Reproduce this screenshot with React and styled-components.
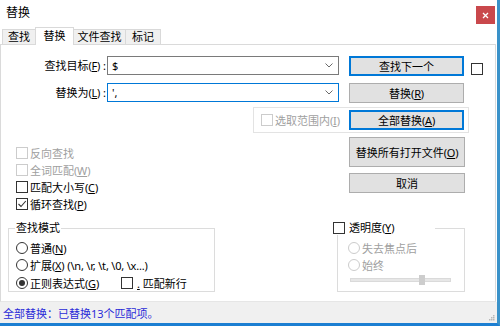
import React from "react";
import styled, { createGlobalStyle } from "styled-components";

const GlobalStyle = createGlobalStyle`
  html, body {
    margin: 0;
    padding: 0;
    background: #fff;
  }
  body {
    font-family: "Noto Sans", "Noto Sans CJK SC", sans-serif;
    font-size: 11px;
    color: #000;
    text-autospace: no-autospace;
  }
  * {
    box-sizing: border-box;
  }
`;

const Window = styled.div`
  width: 500px;
  height: 326px;
  display: flex;
  flex-direction: column;
  background: #fff;
  border-right: 3px solid #3a92c9;
  border-bottom: 3px solid #1c7fd2;
  overflow: hidden;
`;

const TitleBar = styled.div`
  flex: none;
  height: 27px;
  display: flex;
  justify-content: space-between;
  align-items: flex-start;
  padding-left: 6px;
`;

const Title = styled.div`
  font-size: 12px;
  line-height: 26px;
`;

const CloseButton = styled.div`
  width: 19px;
  height: 18px;
  margin: 6px 2px 0 0;
  background: #c9484c;
  display: flex;
  align-items: center;
  justify-content: center;
`;

const TabStrip = styled.div`
  flex: none;
  height: 17px;
  display: flex;
  align-items: flex-end;
  padding-left: 2px;
  position: relative;
  z-index: 1;
`;

const Tab = styled.div`
  width: ${p => p.$w}px;
  height: ${p => (p.$active ? 18 : 15)}px;
  margin-bottom: ${p => (p.$active ? -1 : 0)}px;
  margin-left: ${p => (p.$first ? 0 : -1)}px;
  background: ${p => (p.$active ? "#fff" : "#f0f0f0")};
  border: 1px solid #d9d9d9;
  border-bottom: none;
  display: flex;
  justify-content: center;
  line-height: ${p => (p.$active ? 15 : 14)}px;
  position: relative;
  z-index: ${p => (p.$active ? 2 : 1)};
`;

const Panel = styled.div`
  flex: none;
  height: 258px;
  margin-right: 1px;
  border: 1px solid #dadada;
  border-bottom-color: #e6e6e6;
  padding-top: 11px;
  display: flex;
  flex-direction: column;
`;

const FieldRow = styled.div`
  display: flex;
  align-items: flex-start;
  height: 20px;
  margin-top: ${p => p.$gap || 0}px;
`;

const FieldLabel = styled.div`
  width: 106px;
  text-align: right;
  line-height: 19px;
  padding-right: 1px;
`;

const Combo = styled.div`
  width: 232px;
  height: 19px;
  border: 1px solid ${p => (p.$focused ? "#0078d7" : "#7a7a7a")};
  background: #fff;
  display: flex;
  align-items: center;
  justify-content: space-between;
  padding: 0 5px 0 4px;
  line-height: 17px;
`;

const Button = styled.button`
  flex: none;
  width: ${p => p.$w || 115}px;
  height: ${p => p.$h || 20}px;
  margin: 0 0 0 ${p => p.$ml || 0}px;
  padding: 0;
  font: inherit;
  font-size: 11px;
  color: #000;
  background: #e1e1e1;
  border: 1px solid ${p => (p.$focused ? "#0078d7" : "#adadad")};
  box-shadow: ${p => (p.$focused ? "inset 0 0 0 1px #0078d7" : "none")};
  display: flex;
  align-items: center;
  justify-content: center;
`;

const Paren = styled.span`
  font-family: "Noto Sans", sans-serif;
  letter-spacing: -0.2px;

  u {
    text-decoration: underline;
  }
`;

const Mn = ({ k }) => (
  <Paren>
    (<u>{k}</u>)
  </Paren>
);

const Box = styled.span`
  flex: none;
  width: 12px;
  height: 12px;
  border: 1px solid ${p => (p.$disabled ? "#cccccc" : "#333")};
  background: #fff;
  display: flex;
  align-items: center;
  justify-content: center;
  margin-top: ${p => p.$mt || 0}px;
  margin-left: ${p => p.$ml || 0}px;
`;

const Radio = styled.span`
  flex: none;
  width: 12px;
  height: 12px;
  border-radius: 50%;
  border: 1px solid ${p => (p.$disabled ? "#cccccc" : "#333")};
  display: flex;
  align-items: center;
  justify-content: center;

  &::after {
    content: "";
    width: 6px;
    height: 6px;
    border-radius: 50%;
    background: ${p => (p.$checked ? "#333" : "transparent")};
  }
`;

const Option = styled.div`
  display: flex;
  align-items: center;
  gap: ${p => p.$gap || 2}px;
  height: ${p => p.$h || 17}px;
  color: ${p => (p.$disabled ? "#a0a0a0" : "#000")};
  white-space: nowrap;
  margin-left: ${p => p.$ml || 0}px;
`;

const OptionText = styled.span`
  margin-left: ${p => p.$ml || 0}px;
`;

const SelectionBox = styled.div`
  margin: 4px 0 0 252px;
  width: 216px;
  height: 26px;
  border: 1px solid #e3e3e3;
  display: flex;
  align-items: center;
  padding-left: 7px;
`;

const ClippedOption = styled(Option)`
  width: 80px;
  margin-right: 8px;
  overflow: hidden;
`;

const Lower = styled.div`
  display: flex;
  margin-top: 4px;
`;

const OptionColumn = styled.div`
  width: 348px;
  padding: 7px 0 0 15px;
  display: flex;
  flex-direction: column;
`;

const ButtonColumn = styled.div`
  display: flex;
  flex-direction: column;
  gap: 6px;
`;

const Groups = styled.div`
  display: flex;
  margin-top: 9px;
`;

const Group = styled.fieldset`
  margin: 0 0 0 ${p => p.$ml}px;
  width: ${p => p.$w}px;
  height: 71px;
  padding: 4px 0 0 ${p => p.$pl}px;
  border: 1px solid #dcdcdc;
  min-width: 0;
`;

const Legend = styled.legend`
  padding: 0 1px;
  margin-left: ${p => p.$ml || 0}px;
  line-height: 14px;
  width: ${p => (p.$w ? `${p.$w}px` : "auto")};
  display: flex;
  align-items: center;
  gap: 4px;
`;

const Track = styled.div`
  margin: 4px 0 0 2px;
  width: 101px;
  height: 4px;
  background: #e7e7e7;
  border: 1px solid #dadada;
  display: flex;
  align-items: center;
  padding-left: 68px;
`;

const Thumb = styled.div`
  width: 6px;
  height: 10px;
  background: #cdcdcd;
  flex: none;
`;

const StatusBar = styled.div`
  flex: 1;
  background: #f0f0f0;
  display: flex;
  align-items: center;
  justify-content: space-between;
  padding-left: 3px;
  color: #2a2ad8;
`;

const Grip = styled.svg`
  align-self: flex-end;
  margin: 0 2px 2px 0;
`;

const Chevron = () => (
  <svg width="8" height="5" viewBox="0 0 8 5">
    <path d="M0.5 0.5 L4 4 L7.5 0.5" fill="none" stroke="#6a6a6a" strokeWidth="1" />
  </svg>
);

const Tick = () => (
  <svg width="10" height="10" viewBox="0 0 10 10">
    <path d="M1.5 5 L4 7.5 L8.8 2" fill="none" stroke="#333" strokeWidth="1.1" />
  </svg>
);

const App = () => (
  <>
    <GlobalStyle />
    <Window>
      <TitleBar>
        <Title>替换</Title>
        <CloseButton>
          <svg width="7" height="7" viewBox="0 0 7 7">
            <path d="M1 1 L6 6 M6 1 L1 6" stroke="#fff" strokeWidth="1.3" />
          </svg>
        </CloseButton>
      </TitleBar>

      <TabStrip>
        <Tab $w={34} $first>查找</Tab>
        <Tab $w={39} $active>替换</Tab>
        <Tab $w={53}>文件查找</Tab>
        <Tab $w={36}>标记</Tab>
      </TabStrip>

      <Panel>
        <FieldRow>
          <FieldLabel>
            查找目标<Mn k="F" /> :
          </FieldLabel>
          <Combo>
            <span>$</span>
            <Chevron />
          </Combo>
          <Button $ml={10} $focused>查找下一个</Button>
          <Box $ml={7} $mt={7} />
        </FieldRow>

        <FieldRow $gap={7}>
          <FieldLabel>
            替换为<Mn k="L" /> :
          </FieldLabel>
          <Combo $focused>
            <span>',</span>
            <Chevron />
          </Combo>
          <Button $ml={10}>
            替换<Mn k="R" />
          </Button>
        </FieldRow>

        <SelectionBox>
          <ClippedOption $disabled>
            <Box $disabled />
            <span>
              选取范围内<Mn k="I" />
            </span>
          </ClippedOption>
          <Button $focused>
            全部替换<Mn k="A" />
          </Button>
        </SelectionBox>

        <Lower>
          <OptionColumn>
            <Option $disabled>
              <Box $disabled />
              <span>反向查找</span>
            </Option>
            <Option $disabled>
              <Box $disabled />
              <span>
                全词匹配<Mn k="W" />
              </span>
            </Option>
            <Option>
              <Box />
              <span>
                匹配大小写<Mn k="C" />
              </span>
            </Option>
            <Option>
              <Box>
                <Tick />
              </Box>
              <span>
                循环查找<Mn k="P" />
              </span>
            </Option>
          </OptionColumn>
          <ButtonColumn>
            <Button $w={116} $h={30}>
              替换所有打开文件<Mn k="O" />
            </Button>
            <Button $w={116}>取消</Button>
          </ButtonColumn>
        </Lower>

        <Groups>
          <Group $ml={7} $w={207} $pl={7}>
            <Legend $ml={-1}>查找模式</Legend>
            <Option $h={17.5}>
              <Radio />
              <span>
                普通<Mn k="N" />
              </span>
            </Option>
            <Option $h={17.5}>
              <Radio />
              <span>
                扩展<Mn k="X" /> <Paren>{"(\\n, \\r, \\t, \\0, \\x...)"}</Paren>
              </span>
            </Option>
            <Option $h={17.5}>
              <Radio $checked />
              <span>
                正则表达式<Mn k="G" />
              </span>
              <Box $ml={20} />
              <OptionText $ml={2}>
                <Paren>
                  <u>.</u>
                </Paren>{" "}
                匹配新行
              </OptionText>
            </Option>
          </Group>

          <Group $ml={122} $w={128} $pl={10}>
            <Legend $ml={-16} $w={103}>
              <Box />
              <span>
                透明度<Mn k="Y" />
              </span>
            </Legend>
            <Option $h={17.5} $disabled>
              <Radio $disabled />
              <span>失去焦点后</span>
            </Option>
            <Option $h={17.5} $disabled>
              <Radio $disabled />
              <span>始终</span>
            </Option>
            <Track>
              <Thumb />
            </Track>
          </Group>
        </Groups>
      </Panel>

      <StatusBar>
        <span>全部替换：已替换13个匹配项。</span>
        <Grip width="7" height="7" viewBox="0 0 7 7">
          <rect x="5" y="1" width="1.5" height="1.5" fill="#b8b8b8" />
          <rect x="3" y="3" width="1.5" height="1.5" fill="#b8b8b8" />
          <rect x="5" y="3" width="1.5" height="1.5" fill="#b8b8b8" />
          <rect x="1" y="5" width="1.5" height="1.5" fill="#b8b8b8" />
          <rect x="3" y="5" width="1.5" height="1.5" fill="#b8b8b8" />
          <rect x="5" y="5" width="1.5" height="1.5" fill="#b8b8b8" />
        </Grip>
      </StatusBar>
    </Window>
  </>
);

export default App;
